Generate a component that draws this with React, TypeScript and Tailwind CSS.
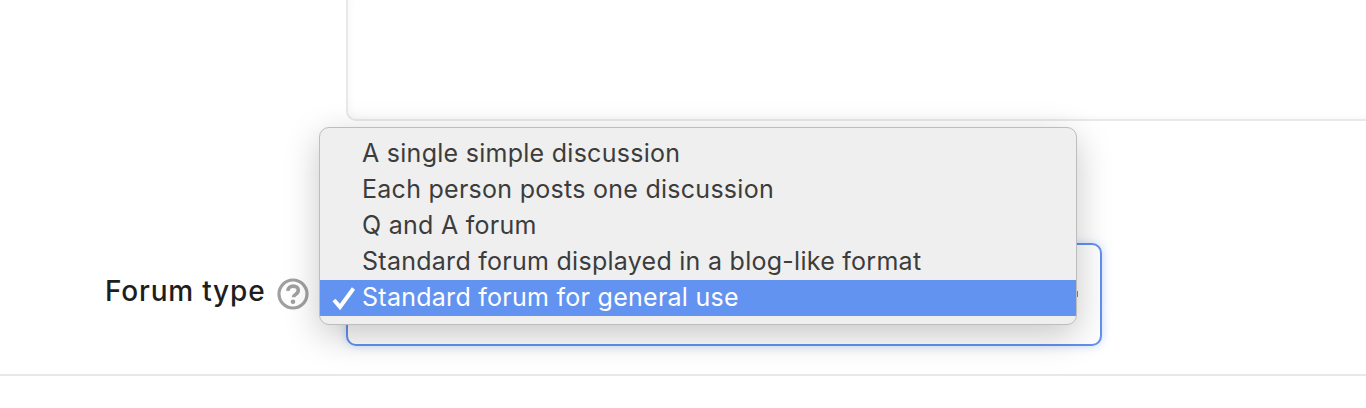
const options = [
  "A single simple discussion",
  "Each person posts one discussion",
  "Q and A forum",
  "Standard forum displayed in a blog-like format",
  "Standard forum for general use",
];

function HelpIcon() {
  return (
    <svg width="32" height="32" viewBox="0 0 32 32" fill="none">
      <circle cx="16" cy="16" r="14" stroke="#a0a0a0" strokeWidth="3.200" />
      <path
        d="M10.800 12.800c.2-2.900 2.400-4.700 5.300-4.700 3 0 5.200 1.700 5.200 4.200 0 1.900-1 2.900-2.500 3.900-1.500.9-2.200 1.500-2.200 3"
        stroke="#a0a0a0"
        strokeWidth="3.600"
      />
      <circle cx="16" cy="23.800" r="2.300" fill="#a0a0a0" />
    </svg>
  );
}

function CheckIcon() {
  return (
    <svg width="24" height="24" viewBox="0 0 24 24" fill="none">
      <path d="M2 14 8 21 21.500 2.500" stroke="#ffffff" strokeWidth="4" />
    </svg>
  );
}

function SelectMenu() {
  return (
    <div className="absolute left-[319px] top-[127px] z-10 w-[758px] h-[198px] rounded-[10px] border border-[#bdbdbd] bg-[#efefef] py-[8px] shadow-[0_10px_35px_rgba(0,0,0,0.22)] overflow-hidden">
      {options.map((option, index) => (
        <div
          key={index}
          className={`flex h-[36px] items-center text-[25px] tracking-[0.27px] ${
            index === 4 ? "bg-[#6393f0] text-white" : "text-[#3c3c3c]"
          }`}
        >
          <span className="flex w-[42px] justify-end pr-[6px]">
            {index === 4 && <CheckIcon />}
          </span>
          <span>{option}</span>
        </div>
      ))}
    </div>
  );
}

export default function App() {
  return (
    <div
      className="relative h-[408px] w-[1366px] overflow-hidden bg-white"
      style={{ fontFamily: '"Inter", "Liberation Sans", sans-serif' }}
    >
      <div className="pl-[346px]">
        <div className="h-[121px] rounded-bl-[10px] border-b-2 border-l-2 border-[#e8e8e8] bg-white shadow-[inset_4px_-3px_5px_rgba(0,0,0,0.025)]" />
      </div>

      <div className="mt-[122px] flex h-[103px]">
        <div className="flex w-[346px] items-center">
          <span className="mb-[7px] ml-[105px] w-[172px] text-[28px] font-medium tracking-[0.8px] text-[#1e1e1e]">
            Forum type
          </span>
          <span className="mt-[-2px]">
            <HelpIcon />
          </span>
        </div>
        <div className="flex w-[756px] items-center justify-end rounded-[10px] border-2 border-[#6390ee] bg-[#fefefe] pb-[2px] pr-[22px] shadow-[0_0_10px_rgba(99,144,238,0.35)]">
          <span className="h-[6px] w-[2px] bg-[#8a8a8a]" />
        </div>
      </div>

      <div className="mt-[28px] h-[2px] bg-[#e6e8ec]" />

      <SelectMenu />
    </div>
  );
}
